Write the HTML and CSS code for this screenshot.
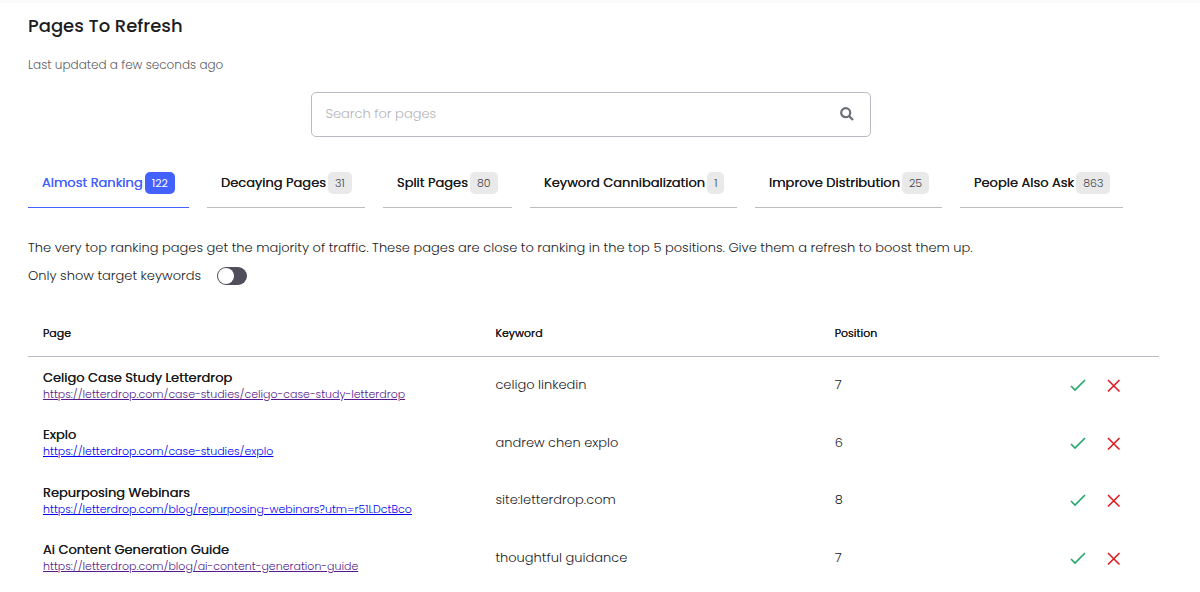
FILE: index.html
```html
<!DOCTYPE html>
<html lang="en">
<head>
<meta charset="utf-8">
<meta name="viewport" content="width=device-width, initial-scale=1">
<title>Pages To Refresh</title>
<link rel="stylesheet" href="styles.css">
</head>
<body>
<svg class="symbols" aria-hidden="true">
  <symbol id="check" viewBox="0 0 16 16"><path d="M1 9l4 4L15 3" fill="none" stroke="currentColor" stroke-width="1.7"/></symbol>
  <symbol id="cross" viewBox="0 0 16 16"><path d="M2 3l11.5 11.5M13.5 3L2 14.500" fill="none" stroke="currentColor" stroke-width="1.6"/></symbol>
</svg>
<main class="page">
  <h1 class="title">Pages To Refresh</h1>
  <p class="updated">Last updated a few seconds ago</p>

  <div class="search-row">
    <form class="search" role="search">
      <input class="search-input" type="text" placeholder="Search for pages" aria-label="Search for pages">
      <button class="search-button" type="button" aria-label="Search">
        <svg width="14" height="14" viewBox="0 0 14 14" fill="none" stroke="currentColor"><circle cx="5.7" cy="5.7" r="4.5" stroke-width="2.2"/><path d="M9 9l4 4" stroke-width="2.3"/></svg>
      </button>
    </form>
  </div>

  <nav class="tabs" aria-label="Page groups">
    <button class="tab tab-active" type="button">Almost Ranking <span class="badge">122</span></button>
    <button class="tab" type="button">Decaying Pages <span class="badge">31</span></button>
    <button class="tab" type="button">Split Pages <span class="badge">80</span></button>
    <button class="tab" type="button">Keyword Cannibalization <span class="badge">1</span></button>
    <button class="tab" type="button">Improve Distribution <span class="badge">25</span></button>
    <button class="tab" type="button">People Also Ask <span class="badge">863</span></button>
  </nav>

  <p class="intro">The very top ranking pages get the majority of traffic. These pages are close to ranking in the top 5 positions. Give them a refresh to boost them up.</p>
  <div class="filter">
    <label class="filter-label" for="target-only">Only show target keywords</label>
    <input class="switch" id="target-only" type="checkbox" role="switch">
  </div>

  <table class="results">
    <colgroup><col class="col-page"><col class="col-keyword"><col class="col-position"><col class="col-actions"></colgroup>
    <thead>
      <tr><th scope="col">Page</th><th scope="col">Keyword</th><th scope="col">Position</th><td></td></tr>
    </thead>
    <tbody>
      <tr>
        <td><strong class="name">Celigo Case Study Letterdrop</strong><a class="link link-seen" href="https://letterdrop.com/case-studies/celigo-case-study-letterdrop">https://letterdrop.com/case-studies/celigo-case-study-letterdrop</a></td>
        <td>celigo linkedin</td><td>7</td>
        <td><div class="actions"><button class="action accept" type="button" aria-label="Accept"><svg><use href="#check"/></svg></button><button class="action reject" type="button" aria-label="Dismiss"><svg><use href="#cross"/></svg></button></div></td>
      </tr>
      <tr>
        <td><strong class="name">Explo</strong><a class="link" href="https://letterdrop.com/case-studies/explo">https://letterdrop.com/case-studies/explo</a></td>
        <td>andrew chen explo</td><td>6</td>
        <td><div class="actions"><button class="action accept" type="button" aria-label="Accept"><svg><use href="#check"/></svg></button><button class="action reject" type="button" aria-label="Dismiss"><svg><use href="#cross"/></svg></button></div></td>
      </tr>
      <tr>
        <td><strong class="name">Repurposing Webinars</strong><a class="link" href="https://letterdrop.com/blog/repurposing-webinars?utm=r51LDctBco">https://letterdrop.com/blog/repurposing-webinars?utm=r51LDctBco</a></td>
        <td>site:letterdrop.com</td><td>8</td>
        <td><div class="actions"><button class="action accept" type="button" aria-label="Accept"><svg><use href="#check"/></svg></button><button class="action reject" type="button" aria-label="Dismiss"><svg><use href="#cross"/></svg></button></div></td>
      </tr>
      <tr>
        <td><strong class="name">Ai Content Generation Guide</strong><a class="link link-seen" href="https://letterdrop.com/blog/ai-content-generation-guide">https://letterdrop.com/blog/ai-content-generation-guide</a></td>
        <td>thoughtful guidance</td><td>7</td>
        <td><div class="actions"><button class="action accept" type="button" aria-label="Accept"><svg><use href="#check"/></svg></button><button class="action reject" type="button" aria-label="Dismiss"><svg><use href="#cross"/></svg></button></div></td>
      </tr>
    </tbody>
  </table>
</main>
</body>
</html>
```
FILE: styles.css
```css
* { box-sizing: border-box; }
body {
  margin: 0;
  border-top: 3px solid #fafafa;
  background: #fff;
  color: #1c1c1f;
  font: 300 13px/20px Poppins, Inter, sans-serif;
}
button, input { font: inherit; color: inherit; }
button { padding: 0; border: 0; background: none; cursor: pointer; }
.symbols { display: none; }
.page { padding: 8px 41px 8px 28px; }
.title { margin: 0; font-size: 18px; line-height: 30px; font-weight: 500; }
.updated { margin: 14px 0 17px; font-size: 12px; color: #606064; }

.search-row { padding-right: 6px; }
.search {
  display: flex;
  align-items: center;
  max-width: 560px;
  height: 45px;
  margin: 0 auto;
  padding: 0 16px 2px 14px;
  border: 1px solid #bbbac2;
  border-radius: 5px;
}
.search-input { flex: 1; min-width: 0; padding: 0; border: 0; outline: 0; background: none; }
.search-input::placeholder { color: #b4b3b9; opacity: 1; }
.search-button { display: flex; color: #687078; }

.tabs {
  display: grid;
  grid-template-columns: 161fr 158fr 129fr 207fr 187fr 163fr;
  gap: 18px;
  margin: 26px 36px 0 0;
}
.tab {
  display: flex;
  align-items: center;
  gap: 2px;
  padding: 9px 0 13px 14px;
  border-bottom: 1px solid #bdbcbf;
  font-weight: 400;
  text-shadow: 0 0 0 currentColor;
  white-space: nowrap;
}
.badge {
  padding: 1px 7px;
  border-radius: 5px;
  background: #e9e9e9;
  color: #404045;
  font-size: 11px;
  font-weight: 300;
  text-shadow: none;
}
.tab-active { border-color: #4361ff; color: #4361ff; }
.tab-active .badge { background: #4361ff; color: #fff; font-weight: 400; }

.intro { margin: 30px 0 8px; }
.filter { display: flex; align-items: center; gap: 16px; }
.switch {
  appearance: none;
  display: flex;
  width: 30px;
  height: 18px;
  margin: 0;
  padding: 1px;
  border-radius: 9px;
  background: #4f4e5b;
}
.switch::before { content: ""; width: 16px; height: 16px; border-radius: 50%; background: #fff; }
.switch:checked { justify-content: flex-end; }

.results { width: 100%; margin-top: 24px; border-collapse: collapse; table-layout: fixed; }
.col-page { width: 40%; }
.col-keyword { width: 30%; }
.col-position { width: 20%; }
.col-actions { width: 10%; }
.results th { height: 46px; padding: 0 15px; font-size: 11px; font-weight: 400; text-align: left; text-shadow: 0 0 0 currentColor; }
.results thead { border-bottom: 1px solid #bbbac2; }
.results tbody td { height: 58px; padding: 0 15px; }
.results tbody tr:nth-child(even) td { height: 57px; }
.name { display: block; line-height: 18px; font-weight: 400; text-shadow: 0 0 0 currentColor; }
.link { display: block; font-size: 11px; line-height: 15px; color: #0000ee; white-space: nowrap; }
.link-seen { color: #551a8b; }
.actions { display: flex; justify-content: flex-end; gap: 20px; padding-right: 22px; }
.action { display: flex; }
.action svg { width: 16px; height: 16px; }
.accept { color: #27a96b; }
.reject { color: #e01b22; }
```
